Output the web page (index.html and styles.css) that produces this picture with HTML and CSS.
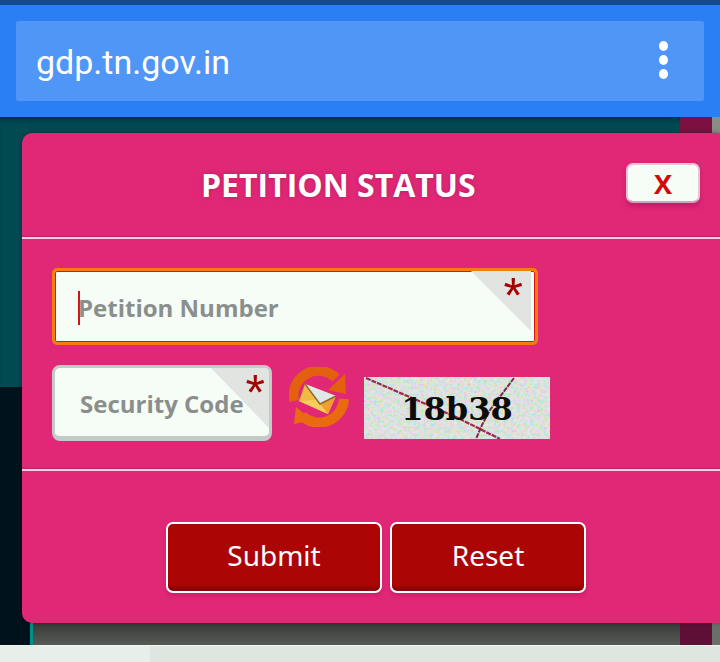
FILE: index.html
```html
<!DOCTYPE html>
<html lang="en">
<head>
<meta charset="utf-8">
<title>Petition Status</title>
<link rel="stylesheet" href="styles.css">
</head>
<body>
<div class="statusbar"></div>
<header class="toolbar">
  <div class="urlbar">
    <span class="url">gdp.tn.gov.in</span>
    <div class="menu"><i></i><i></i><i></i></div>
  </div>
</header>
<main class="stage">
  <div class="backdrop">
    <div class="col col-a"><div class="teal"></div><div class="ink"></div></div>
    <div class="col col-b"><div class="teal grow"></div><div class="under"></div></div>
    <div class="col col-c"></div>
    <div class="col col-d"></div>
  </div>
  <section class="modal">
    <div class="modal-head">
      <h1 class="title">PETITION STATUS</h1>
      <button class="close" type="button">X</button>
    </div>
    <hr class="rule">
    <form class="form">
      <div class="field field-focus">
        <span class="fold fold-wide"></span>
        <span class="caret"></span>
        <input class="input input-wide" type="text" placeholder="Petition Number">
        <span class="req">*</span>
      </div>
      <div class="row">
        <div class="field field-small">
          <span class="fold fold-small"></span>
          <input class="input input-small" type="text" placeholder="Security Code">
          <span class="req req-small">*</span>
        </div>
        <svg class="refresh" viewBox="0 0 60 60" aria-hidden="true">
          <path d="M5 34A25 25 0 0 1 47 11" fill="none" stroke="#e2600e" stroke-width="10"/>
          <path d="M56 7 57 27 39 23z" fill="#e2600e"/>
          <path d="M55 32A25 25 0 0 1 13 49" fill="none" stroke="#ea6a10" stroke-width="10"/>
          <path d="M7 40 5 57 23 53z" fill="#ea6a10"/>
          <path d="M16 17 47 29 39 47 10 34z" fill="#f3b945"/>
          <path d="M10 34 27 33 39 47z" fill="#f8cd5c"/>
          <path d="M47 29 31 36 39 47z" fill="#ee9f2e"/>
          <path d="M16 17 47 29 31 37z" fill="#dfe8e8"/>
          <path d="M16 17 31 37 47 29" fill="none" stroke="#8f6a2a" stroke-width="1.4"/>
        </svg>
        <svg class="captcha" viewBox="0 0 186 62" role="img" aria-label="Security code image">
          <defs>
            <filter id="noise" x="0" y="0" width="100%" height="100%">
              <feTurbulence type="fractalNoise" baseFrequency="0.3" numOctaves="2" seed="4"/>
              <feColorMatrix type="saturate" values="3"/>
              <feComponentTransfer>
                <feFuncA type="linear" slope="0" intercept="1"/>
              </feComponentTransfer>
            </filter>
          </defs>
          <rect width="186" height="62" fill="#e8eeeb"/>
          <rect width="186" height="62" filter="url(#noise)" opacity=".22"/>
          <path d="M2 1 41 18 92 40 136 62" fill="none" stroke="#a02a48" stroke-width="2.2" stroke-dasharray="5 1"/>
          <path d="M150 1 126 33 118 48 112 62" fill="none" stroke="#7e2a44" stroke-width="2" stroke-dasharray="5 1"/>
          <text x="93" y="43" class="captcha-text" text-anchor="middle">18b38</text>
        </svg>
      </div>
    </form>
    <hr class="rule rule-low">
    <div class="actions">
      <button class="btn btn-submit" type="button">Submit</button>
      <button class="btn btn-reset" type="button">Reset</button>
    </div>
  </section>
</main>
<footer class="bottom"><div class="tab"></div></footer>
</body>
</html>
```

FILE: styles.css
```css
* { box-sizing: border-box; }
html, body { margin: 0; padding: 0; }
body {
  width: 720px;
  height: 662px;
  overflow: hidden;
  font-family: "Open Sans", "Noto Sans", sans-serif;
  background: #e0e6e0;
}
.statusbar { height: 5px; background: #174a8c; }
.toolbar { height: 112px; padding: 16px; background: #2a7ff5; }
.urlbar {
  height: 80px;
  display: flex;
  align-items: center;
  justify-content: space-between;
  padding: 0 36px 0 20px;
  background: #5096f6;
  border-radius: 2px;
}
.url {
  font-family: Roboto, sans-serif;
  font-size: 34px;
  color: #fff;
  position: relative;
  top: 1px;
}
.menu { display: flex; flex-direction: column; gap: 4px; margin-top: -2px; }
.menu i { width: 9px; height: 10px; border-radius: 50%; background: #fff; display: block; }

.stage { position: relative; height: 528px; overflow: hidden; }
.backdrop { display: flex; height: 100%; }
.col { display: flex; flex-direction: column; }
.col-a { width: 30px; }
.col-a .teal { height: 270px; }
.col-a .ink { flex: 1; background: #00121c; }
.col-b { width: 650px; }
.teal { background: #014a52; box-shadow: inset 0 6px 5px -4px #00282e; }
.grow { flex: 1; }
.under {
  height: 22px;
  border-left: 3px solid #009088;
  background: linear-gradient(180deg, #383a38, #565a54);
}
.col-c { width: 32px; background: linear-gradient(180deg, #7c1040, #5e0f35); }
.col-d { width: 8px; background: linear-gradient(180deg, #8b8e84, #6a6e68); }

.modal {
  position: absolute;
  left: 22px;
  top: 16px;
  width: 698px;
  height: 490px;
  background: #e02877;
  border-radius: 10px 0 0 10px;
  box-shadow: 0 0 4px rgba(0, 0, 0, .35);
}
.modal-head {
  height: 104px;
  display: flex;
  align-items: flex-start;
  justify-content: space-between;
  padding: 30px 20px 0 179px;
}
.title {
  margin: 3px 0 0;
  font-size: 32px;
  line-height: 38px;
  font-weight: 700;
  color: #fff;
  text-shadow: 0 0 4px #b81c62;
  white-space: nowrap;
}
.close {
  width: 74px;
  height: 40px;
  padding: 0;
  background: #f6fcf6;
  border: 2px solid #e8c6d6;
  border-bottom-color: #cfa4ba;
  border-radius: 7px;
  box-shadow: 0 4px 4px rgba(170, 20, 90, .5);
  color: #d40808;
  font: 700 27px "Open Sans", sans-serif;
}
.rule { margin: 0; border: 0; height: 2px; background: #f6d0e0; box-shadow: 0 -1px 1px rgba(170, 20, 90, .5); }
.rule-low { margin-top: 28px; }

.form { padding: 29px 0 0 30px; display: flex; flex-direction: column; gap: 20px; }
.field { position: relative; background: #f6fcf6; overflow: hidden; display: block; }
.field-focus {
  width: 486px;
  height: 77px;
  border: 3px solid #f47c10;
  border-radius: 5px;
  box-shadow: inset 0 0 0 1px #d81510;
}
.field-small {
  width: 220px;
  height: 76px;
  border: 3px solid #c2cbc6;
  border-bottom-width: 5px;
  border-radius: 8px;
}
.fold { position: absolute; top: 0; right: 0; background: #e2e4e2; }
.fold-wide { width: 60px; height: 60px; right: 4px; clip-path: polygon(0 0, 100% 0, 100% 100%); }
.fold-small { width: 58px; height: 60px; clip-path: polygon(0 0, 100% 0, 100% 100%); }
.caret { position: absolute; left: 23px; top: 20px; width: 2px; height: 34px; background: #d0141c; }
.input {
  display: block;
  position: relative;
  width: 100%;
  height: 100%;
  border: 0;
  background: transparent;
  outline: 0;
  font: 700 24px "Open Sans", sans-serif;
  color: #8b8f8c;
}
.input::placeholder { color: #8b8f8c; opacity: 1; }
.input-wide { padding: 2px 50px 0 23px; }
.input-small { padding: 2px 0 0 25px; }
.req {
  position: absolute;
  right: 12px;
  top: -2px;
  font: 400 50px/54px "Liberation Sans", sans-serif;
  color: #a60404;
}
.req-small { right: 4px; top: -2px; }
.row { display: flex; align-items: flex-start; }
.refresh { width: 60px; height: 60px; margin: 2px 0 0 17px; }
.captcha { width: 186px; height: 62px; margin: 12px 0 0 15px; display: block; }
.captcha-text {
  font-family: "DejaVu Serif", serif;
  font-size: 32px;
  font-weight: 700;
  fill: #0c0c0c;
}
.actions { display: flex; gap: 8px; padding: 51px 0 0 144px; }
.btn {
  height: 71px;
  padding: 0 0 5px;
  background: #ac0505;
  border: 2px solid #fff;
  border-radius: 7px;
  box-shadow: inset 0 -5px 3px -1px #8c0404, 0 3px 4px rgba(170, 20, 90, .4);
  color: #fff;
  font: 400 28px "Noto Sans", sans-serif;
}
.btn-submit { width: 216px; }
.btn-reset { width: 196px; }
.bottom { height: 17px; background: #dfe6e0; border-top: 1px solid #f1f5f1; }
.tab { width: 150px; height: 100%; background: #e8eeea; }
```
